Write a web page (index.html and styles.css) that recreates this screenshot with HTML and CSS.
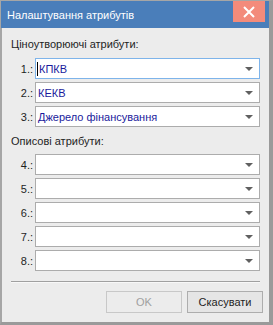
FILE: index.html
```html
<!DOCTYPE html>
<html lang="uk">
<head>
  <meta charset="UTF-8" />
  <meta name="viewport" content="width=device-width, initial-scale=1.0" />
  <title>Налаштування атрибутів</title>
  <link rel="stylesheet" href="styles.css">
</head>
<body>
  <div class="window">
    <div class="title-bar">
      <span class="title">Налаштування атрибутів</span>
      <div class="close-button" title="Закрити">
        <svg width="14" height="14" viewBox="0 0 14 14">
          <path d="M2 2 L12 12 M12 2 L2 12" stroke="#fff" stroke-width="2" fill="none" />
        </svg>
      </div>
    </div>

    <div class="content">
      <div class="group-label">Ціноутворюючі атрибути:</div>
      <div class="rows">
        <div class="row">
          <span class="row-label">1.:</span>
          <div class="combo focused"><span class="caret"></span><span class="combo-text">КПКВ</span><span class="arrow"></span></div>
        </div>
        <div class="row">
          <span class="row-label">2.:</span>
          <div class="combo"><span class="combo-text">КЕКВ</span><span class="arrow"></span></div>
        </div>
        <div class="row">
          <span class="row-label">3.:</span>
          <div class="combo"><span class="combo-text">Джерело фінансування</span><span class="arrow"></span></div>
        </div>
      </div>

      <div class="group-label second">Описові атрибути:</div>
      <div class="rows">
        <div class="row">
          <span class="row-label">4.:</span>
          <div class="combo"><span class="combo-text"></span><span class="arrow"></span></div>
        </div>
        <div class="row">
          <span class="row-label">5.:</span>
          <div class="combo"><span class="combo-text"></span><span class="arrow"></span></div>
        </div>
        <div class="row">
          <span class="row-label">6.:</span>
          <div class="combo"><span class="combo-text"></span><span class="arrow"></span></div>
        </div>
        <div class="row">
          <span class="row-label">7.:</span>
          <div class="combo"><span class="combo-text"></span><span class="arrow"></span></div>
        </div>
        <div class="row">
          <span class="row-label">8.:</span>
          <div class="combo"><span class="combo-text"></span><span class="arrow"></span></div>
        </div>
      </div>

      <div class="separator"></div>

      <div class="buttons">
        <div class="button disabled">OK</div>
        <div class="button">Скасувати</div>
      </div>
    </div>
  </div>
</body>
</html>
```

FILE: styles.css
```css
html, body {
  margin: 0;
  height: 100%;
  overflow: hidden;
}
body {
  font-family: "Liberation Sans", Arial, sans-serif;
  font-size: 11px;
  color: #1e1e1e;
  background: #9a9a9a;
}
.window {
  box-sizing: border-box;
  width: 273px;
  height: 325px;
  border-style: solid;
  border-color: #a6a6a6 #9a9a9a #9a9a9a #a6a6a6;
  border-width: 1px 4px 3px 1px;
  display: flex;
  flex-direction: column;
  background: #ececec;
}
.title-bar {
  height: 27px;
  background: #4a7eba;
  display: flex;
  align-items: flex-start;
  justify-content: space-between;
  flex-shrink: 0;
}
.title {
  color: white;
  padding: 7px 0 0 6px;
  line-height: 14px;
}
.close-button {
  width: 32px;
  height: 21px;
  background: #f38b7b;
  display: flex;
  align-items: center;
  justify-content: center;
  margin-right: 4px;
}
.content {
  flex: 1;
  border-left: 1px solid #a6a6a6;
  padding: 9px 9px 0 9px;
  display: flex;
  flex-direction: column;
}
.group-label {
  line-height: 15px;
  margin-bottom: 6px;
}
.group-label.second {
  margin-top: 7px;
  margin-bottom: 5px;
}
.rows {
  display: flex;
  flex-direction: column;
  gap: 3px;
}
.row {
  display: flex;
  align-items: center;
}
.row-label {
  width: 22px;
  text-align: right;
  margin-right: 2px;
}
.combo {
  flex: 1;
  height: 21px;
  box-sizing: border-box;
  border: 1px solid #acacac;
  background: white;
  display: flex;
  align-items: center;
  padding-left: 2px;
  position: relative;
}
.combo.focused {
  border-color: #7eb4ea;
}
.combo-text {
  flex: 1;
  color: #1a1a9c;
}
.focused .combo-text {
  padding-left: 1px;
}
.caret {
  position: absolute;
  left: 1px;
  top: 3px;
  width: 1px;
  height: 14px;
  background: #000;
}
.arrow {
  width: 0;
  height: 0;
  border-left: 4px solid transparent;
  border-right: 4px solid transparent;
  border-top: 4px solid #606060;
  margin-right: 6px;
}
.separator {
  margin-top: 10px;
  height: 1px;
  background: #a0a0a0;
  border-bottom: 1px solid #f8f8f8;
}
.buttons {
  display: flex;
  justify-content: flex-end;
  gap: 5px;
  margin-top: 8px;
  margin-right: -3px;
}
.button {
  box-sizing: border-box;
  width: 76px;
  height: 22px;
  border: 1px solid #adadad;
  background: #e5e5e5;
  display: flex;
  align-items: center;
  justify-content: center;
}
.button.disabled {
  color: #a0a0a0;
  border-color: #c8c8c8;
  background: #ececec;
}
```
